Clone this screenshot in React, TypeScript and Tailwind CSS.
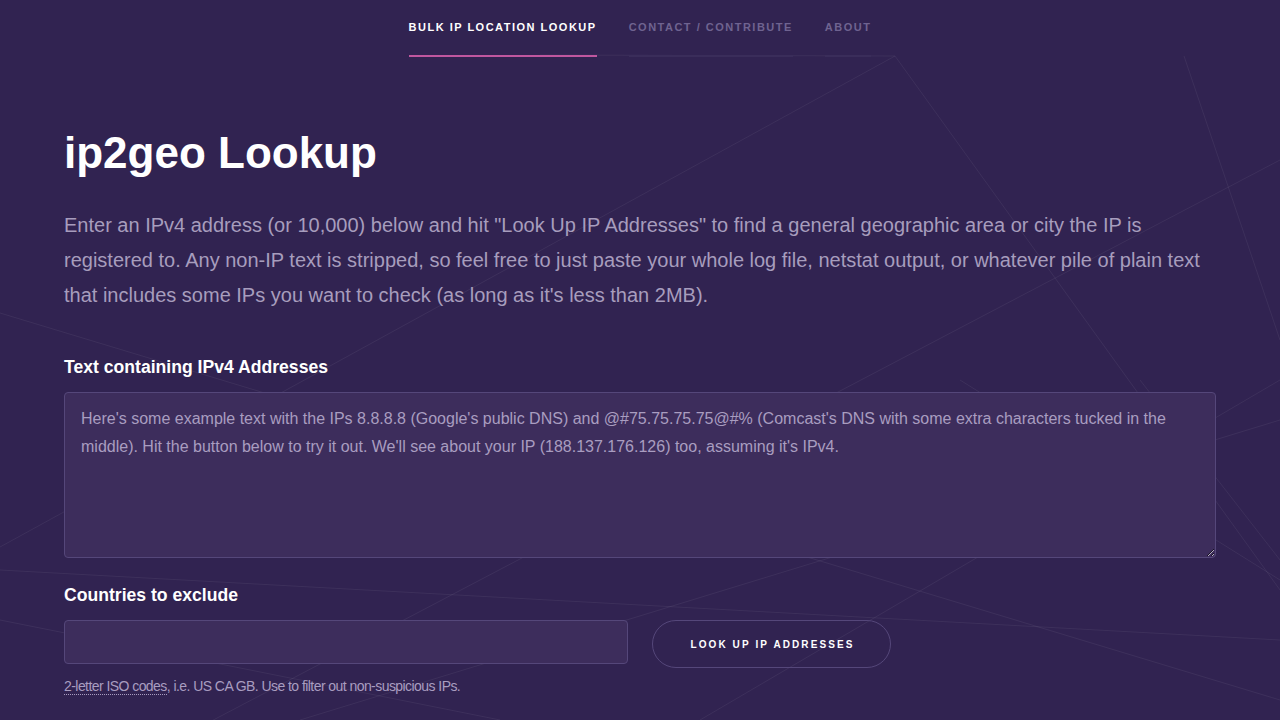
import React from "react";

const lines: [number, number, number, number][] = [
  [0, 547, 895, 56],
  [895, 56, 1280, 590],
  [540, 55, 895, 56],
  [1184, 56, 1280, 340],
  [1280, 160, 0, 832],
  [0, 313, 1280, 700],
  [0, 570, 1280, 640],
  [960, 380, 1280, 580],
  [1280, 380, 700, 720],
  [300, 720, 1280, 420],
  [1140, 380, 1280, 560],
  [0, 620, 500, 720],
];

export default function App() {
  return (
    <div
      className="relative w-full h-[720px] overflow-hidden bg-[#312351] text-white"
      style={{ fontFamily: '"Liberation Sans", Arial, sans-serif' }}
    >
      <svg
        className="absolute inset-0 pointer-events-none"
        width="1280"
        height="720"
        viewBox="0 0 1280 720"
      >
        {lines.map((l, i) => (
          <line
            key={i}
            x1={l[0]}
            y1={l[1]}
            x2={l[2]}
            y2={l[3]}
            stroke="#ffffff"
            strokeOpacity="0.06"
            strokeWidth="1"
          />
        ))}
      </svg>

      <div className="relative">
        <nav className="flex justify-center gap-8 pt-[21px]">
          <a className="block text-[11px] font-bold tracking-[1.5px] uppercase text-white pb-[21px] border-b-2 border-[#c0579f] leading-[13px]">
            Bulk IP Location Lookup
          </a>
          <a className="block text-[11px] font-bold tracking-[1.5px] uppercase text-[#6f6390] pb-[21px] border-b-2 border-[#3a2d5a] leading-[13px]">
            Contact / Contribute
          </a>
          <a className="block text-[11px] font-bold tracking-[1.5px] uppercase text-[#6f6390] pb-[21px] border-b-2 border-[#3a2d5a] leading-[13px]">
            About
          </a>
        </nav>

        <main className="px-16 pt-[68px]">
          <h1 className="text-[44px] font-bold leading-[56px] text-white">ip2geo Lookup</h1>
          <p className="mt-[27px] text-[20px] leading-[35px] text-[#a79dbd]">
            Enter an IPv4 address (or 10,000) below and hit "Look Up IP Addresses" to find a general geographic area or city the IP is registered to. Any non-IP text is stripped, so feel free to just paste your whole log file, netstat output, or whatever pile of plain text that includes some IPs you want to check (as long as it's less than 2MB).
          </p>

          <label className="block mt-[42px] text-[17.6px] font-bold leading-[24px] text-white">
            Text containing IPv4 Addresses
          </label>
          <textarea
            className="block mt-[13px] w-full h-[166px] rounded bg-[#3d2d5c] border border-[#55477a] px-4 py-[12px] text-[16px] leading-[28px] text-[#a99dc0] outline-none"
            style={{ fontFamily: '"Liberation Sans", Arial, sans-serif' }}
            defaultValue={
              "Here's some example text with the IPs 8.8.8.8 (Google's public DNS) and @#75.75.75.75@#% (Comcast's DNS with some extra characters tucked in the middle). Hit the button below to try it out. We'll see about your IP (188.137.176.126) too, assuming it's IPv4."
            }
          />

          <label className="block mt-[25px] text-[17.6px] font-bold leading-[24px] text-white">
            Countries to exclude
          </label>
          <div className="flex items-start gap-6 mt-[13px]">
            <input
              className="block w-[564px] h-[44px] rounded bg-[#3d2d5c] border border-[#55477a] px-4 text-[16px] text-[#a99dc0] outline-none"
              type="text"
            />
            <button className="h-[48px] w-[239px] rounded-full border border-[#55477a] text-[10px] font-bold tracking-[2.1px] uppercase text-white pl-[2px]">
              Look up IP addresses
            </button>
          </div>
          <p className="mt-[9px] text-[14px] leading-[18px] text-[#a99dc0] tracking-[-0.04em]">
            <span className="border-b border-dotted border-[#a99dc0]">2-letter ISO codes</span>, i.e. US CA GB. Use to filter out non-suspicious IPs.
          </p>
        </main>
      </div>
    </div>
  );
}
